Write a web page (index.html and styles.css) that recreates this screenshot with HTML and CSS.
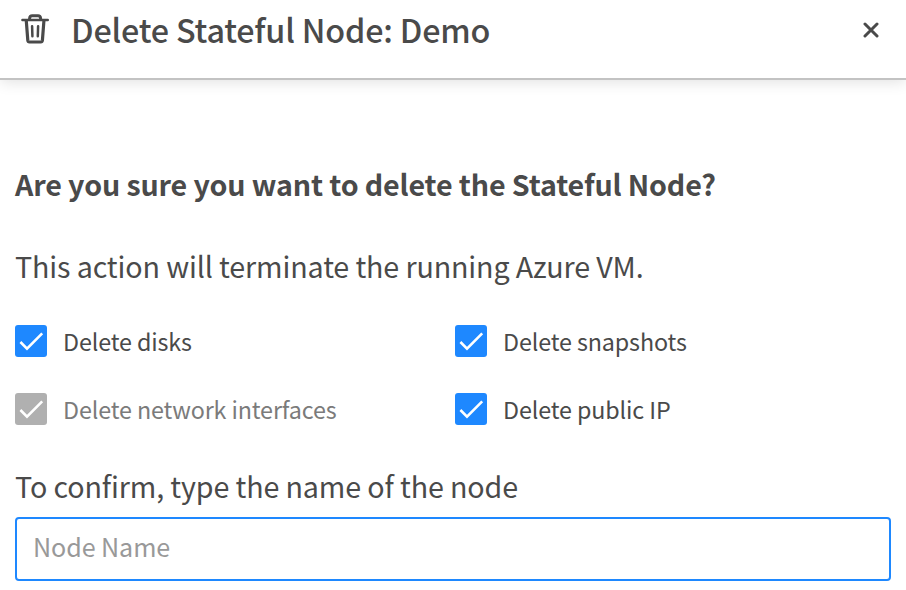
FILE: index.html
```html
<!DOCTYPE html>
<html lang="en">
<head>
<meta charset="utf-8">
<title>Delete Stateful Node</title>
<link rel="stylesheet" href="styles.css">
</head>
<body>
<div class="modal">
  <header class="header">
    <svg class="trash" width="30" height="32" viewBox="0 0 30 32" fill="none" stroke="#4a4a4a" stroke-linecap="round" stroke-linejoin="round"><path stroke-width="2.4" d="M2.4 7H27.8"/><path stroke-width="3" d="M9.6 6.2V5.4Q9.8 2.8 12.2 2.8H18Q20.4 2.8 20.6 5.4V6.2"/><path stroke-width="3.2" d="M6.3 8L7.8 27.4Q8 29 9.4 29H20.8Q22.2 29 22.4 27.4L23.9 8"/><path stroke-width="2.5" d="M12.1 13.3L12.4 23.3M18.1 13.3L17.8 23.3"/></svg>
    <h1 class="title">Delete Stateful Node: Demo</h1>
    <button class="close" aria-label="Close"><svg width="16" height="16" viewBox="0 0 16 16" stroke="#4a4a4a" stroke-width="3" stroke-linecap="round"><path d="M2 2L14 14M14 2L2 14"/></svg></button>
  </header>
  <main class="body">
    <h2 class="question">Are you sure you want to delete the Stateful Node?</h2>
    <p class="note">This action will terminate the running Azure VM.</p>
    <div class="options">
      <label class="option"><span class="box"><svg width="32" height="32" viewBox="0 0 32 32"><path d="M5.4 17L12 23.6L27.2 8.4"/></svg></span><span>Delete disks</span></label>
      <label class="option"><span class="box"><svg width="32" height="32" viewBox="0 0 32 32"><path d="M5.4 17L12 23.6L27.2 8.4"/></svg></span><span>Delete snapshots</span></label>
      <label class="option disabled"><span class="box"><svg width="32" height="32" viewBox="0 0 32 32"><path d="M5.4 17L12 23.6L27.2 8.4"/></svg></span><span>Delete network interfaces</span></label>
      <label class="option"><span class="box"><svg width="32" height="32" viewBox="0 0 32 32"><path d="M5.4 17L12 23.6L27.2 8.4"/></svg></span><span>Delete public IP</span></label>
    </div>
    <label class="confirm" for="name">To confirm, type the name of the node</label>
    <input class="name" id="name" type="text" placeholder="Node Name">
  </main>
</div>
</body>
</html>
```
FILE: styles.css
```css
* { box-sizing: border-box; }
body { margin: 0; background: #fff; color: #4a4a4a; font-family: "Noto Sans CJK SC", sans-serif; overflow: hidden; }
h1, h2, p { margin: 0; }
.header { display: flex; align-items: flex-start; height: 80px; padding: 0 27px 0 20px; border-bottom: 2px solid #c3c3c3; box-shadow: 0 2px 14px rgba(0,0,0,.12); }
.trash { margin-top: 13px; }
.title { margin-left: 21px; font-size: 32.3px; font-weight: 500; line-height: 59px; letter-spacing: -.17px; white-space: nowrap; }
.close { margin: 22px 0 0 auto; padding: 0; border: 0; background: none; line-height: 0; }
.body { padding: 79px 15px 0; }
.question { font-size: 28.65px; font-weight: 700; line-height: 50px; letter-spacing: -.14px; }
.note { margin-top: 32px; font-size: 28.65px; line-height: 50px; letter-spacing: -.12px; }
.options { display: grid; grid-template-columns: 440px 1fr; row-gap: 36px; margin-top: 34px; }
.option { display: flex; align-items: center; gap: 16px; height: 32px; font-size: 23.3px; line-height: 32px; letter-spacing: -.12px; }
.box { width: 32px; height: 32px; border-radius: 3px; background: #1e88ff; }
.box svg { display: block; fill: none; stroke: #fff; stroke-width: 2.6; }
.disabled { color: #7b7b7b; }
.disabled .box { background: #b0b0b0; }
.confirm { display: block; margin-top: 36px; font-size: 28.65px; line-height: 50px; letter-spacing: -.12px; }
.name { display: block; width: 876px; height: 64px; margin-top: 6px; padding: 0 16px 7px; border: 2px solid #1e88ff; border-radius: 4px; font: 25.1px "Noto Sans CJK SC", sans-serif; letter-spacing: -.08px; outline: 0; }
.name::placeholder { color: #999; }
```
